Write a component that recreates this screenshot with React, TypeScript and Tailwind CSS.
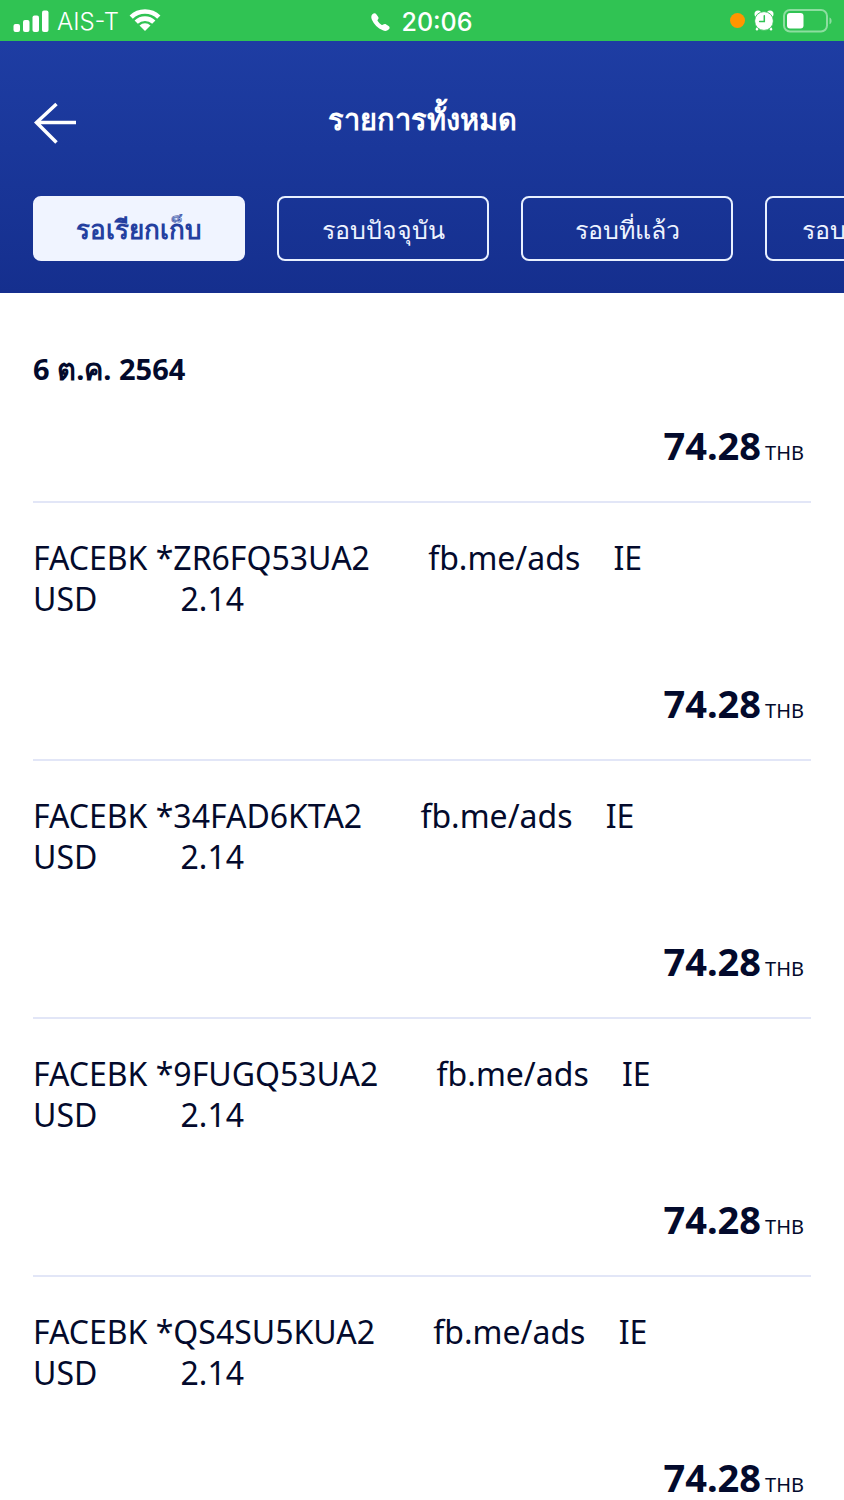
import React, { useState } from 'react';

type Transaction = {
    id: number;
    ref?: string;
    amount: string;
};

const tabs = ['รอเรียกเก็บ', 'รอบปัจจุบัน', 'รอบที่แล้ว', 'รอบก่อนหน้า'];

const transactions: Transaction[] = [
    { id: 1, amount: '74.28' },
    { id: 2, ref: '*ZR6FQ53UA2', amount: '74.28' },
    { id: 3, ref: '*34FAD6KTA2', amount: '74.28' },
    { id: 4, ref: '*9FUGQ53UA2', amount: '74.28' },
    { id: 5, ref: '*QS4SU5KUA2', amount: '74.28' },
];

const StatusBar = () => (
    <div className="relative flex h-[41px] items-center justify-between bg-[#30c353] pl-[13px] pr-[11px] font-['Inter',sans-serif] text-white">
        <div className="flex items-center">
            <svg className="h-[22px] w-9" viewBox="0 0 36 22" fill="currentColor">
                <rect x="0.5" y="14" width="6.5" height="8" rx="2" />
                <rect x="10" y="10" width="6.5" height="12" rx="2" />
                <rect x="19.5" y="5.5" width="6.5" height="16.5" rx="2" />
                <rect x="29" y="0.5" width="6.5" height="21.5" rx="2" />
            </svg>
            <span className="ml-2 pt-[2px] text-2xl font-light">AIS-T</span>
            <svg className="ml-[10px] h-[23px] w-8" viewBox="0 0 32 23" fill="none" stroke="currentColor" strokeWidth="4.6">
                <path d="M2.2 8.200a19.500 19.500 0 0 1 27.600 0" />
                <path d="M7.200 13.200a12.500 12.500 0 0 1 17.600 0" />
                <path d="M16 22l-5.500-5.500a7.800 7.800 0 0 1 11 0z" fill="currentColor" stroke="none" />
            </svg>
        </div>
        <div className="absolute inset-x-0 flex items-center justify-center pt-[2px]">
            <svg className="mr-[11px] h-[18px] w-[19px]" viewBox="0 0 19 18" fill="currentColor">
                <path d="M1.400 1.300C2.700.100 4.300-.1 5.300 1.200L7.100 3.700C7.800 4.700 7.700 5.700 6.900 6.500C6.300 7.100 6.400 7.600 6.900 8.300C7.900 9.700 9 10.800 10.400 11.700C11.100 12.200 11.600 12.200 12.200 11.600C13.100 10.800 14.200 10.700 15.200 11.400L17.600 13C19 14 18.900 15.400 17.600 16.600C16.100 18 14.100 18.300 11.800 17.300C6.800 15.200 2.900 11.400 .9 6.700C0 4.500 0 2.700 1.400 1.300Z" />
            </svg>
            <span className="text-[25px] font-medium leading-8">20:06</span>
        </div>
        <div className="flex items-center">
            <span className="h-[15px] w-[15px] rounded-full bg-[#ff9500]" />
            <svg className="ml-[9px] h-[21px] w-5" viewBox="0 0 20 21" fill="currentColor">
                <circle cx="4" cy="4" r="3.500" />
                <circle cx="16" cy="4" r="3.500" />
                <path d="M4.500 17l-1.600 2.300M15.500 17l1.600 2.300" stroke="currentColor" strokeWidth="2.400" strokeLinecap="round" />
                <circle cx="10" cy="11" r="9.400" stroke="#30c353" strokeWidth="0.900" />
                <path d="M10.300 5.800v5.700H5.600" fill="none" stroke="#30c353" strokeWidth="1.500" strokeLinecap="round" />
            </svg>
            <svg className="ml-[9px] h-6 w-[50px]" viewBox="0 0 50 24" fill="none">
                <rect x="1" y="1" width="43" height="21.500" rx="6" stroke="#fff" strokeOpacity="0.45" strokeWidth="2" />
                <rect x="4" y="4" width="16.500" height="15.500" rx="3" fill="#fff" />
                <path d="M46.500 8.500c2.800.8 2.800 6 0 6.800z" fill="#fff" fillOpacity="0.45" />
            </svg>
        </div>
    </div>
);

const Amount = ({ value }: { value: string }) => (
    <p className="flex items-baseline justify-end gap-1 pr-[7px] leading-[48px]">
        <span className="text-[38px] font-bold">{value}</span>
        <span className="text-xl">THB</span>
    </p>
);

const App = () => {
    const [active, setActive] = useState(0);

    return (
        <div className="min-h-screen overflow-hidden bg-white font-['Noto_Sans',sans-serif] text-[#030a2c]">
            <StatusBar />
            <header className="bg-linear-to-b from-[#1e3da3] to-[#152f8e] pb-8">
                <div className="grid h-[155px] grid-cols-[42px_1fr_42px] items-center px-[34px] text-white">
                    <button aria-label="Back" className="pt-2">
                        <svg className="h-[42px] w-[42px]" viewBox="0 0 42 42" fill="none" stroke="currentColor" strokeWidth="3.500">
                            <path d="M22.500 2L2.500 20.500L22.500 40.500M2.500 20.500H42" />
                        </svg>
                    </button>
                    <h1 className="text-center text-[29px] font-bold">รายการทั้งหมด</h1>
                </div>
                <nav className="flex gap-8 overflow-hidden pl-[33px]">
                    {tabs.map((tab, idx) => (
                        <button
                            key={tab}
                            onClick={() => setActive(idx)}
                            className={`h-[65px] w-[212px] shrink-0 whitespace-nowrap rounded-lg border-2 pt-[2px] ${
                                active === idx
                                    ? 'border-[#f0f4ff] bg-[#f0f4ff] text-[26px] font-bold text-[#243f9f]'
                                    : 'border-[#e8f0ff] text-[25px] text-[#eef3ff]'
                            }`}
                        >
                            {tab}
                        </button>
                    ))}
                </nav>
            </header>
            <main className="px-[33px] pt-14">
                <h2 className="text-[29px] font-bold leading-10">6 ต.ค. 2564</h2>
                <ul>
                    {transactions.map((item) => (
                        <li key={item.id} className="border-b-2 border-[#e2e6f7] pb-8">
                            {item.ref && (
                                <div className="whitespace-pre pt-[34px] text-[32px] leading-[41px]">
                                    <p>{`FACEBK ${item.ref}       fb.me/ads    IE`}</p>
                                    <p>{'USD          2.14'}</p>
                                </div>
                            )}
                            <div className={item.ref ? 'pt-[60px]' : 'pt-8'}>
                                <Amount value={item.amount} />
                            </div>
                        </li>
                    ))}
                </ul>
            </main>
        </div>
    );
};

export default App;
